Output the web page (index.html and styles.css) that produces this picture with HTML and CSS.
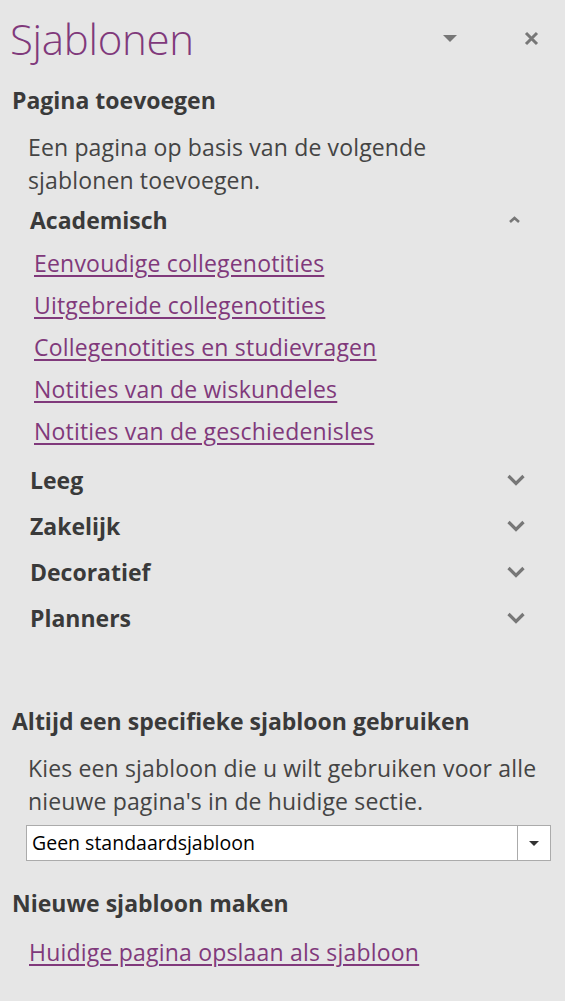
FILE: index.html
```html
<!DOCTYPE html>
<html lang="nl">
<head>
    <meta charset="UTF-8">
    <title>Sjablonen</title>
    <link rel="stylesheet" href="styles.css">
</head>
<body>
    <div class="pane">
        <div class="pane-header">
            <h1 class="pane-title">Sjablonen</h1>
            <div class="pane-actions">
                <span class="menu-btn">
                    <svg width="14" height="7" viewBox="0 0 14 7"><path d="M0 0h14L7 7z" fill="#777"/></svg>
                </span>
                <span class="close-btn">
                    <svg width="15" height="15" viewBox="0 0 15 15"><path d="M2 2l11 11M13 2L2 13" stroke="#777" stroke-width="3"/></svg>
                </span>
            </div>
        </div>

        <h2 class="section-title">Pagina toevoegen</h2>
        <p class="section-text intro">Een pagina op basis van de volgende sjablonen toevoegen.</p>

        <div class="category open">
            <div class="category-head">
                <span>Academisch</span>
                <svg class="chev" width="11" height="7" viewBox="0 0 11 7"><path d="M1 6l4.5-4 4.5 4" fill="none" stroke="#777" stroke-width="2.6"/></svg>
            </div>
            <ul class="template-list">
                <li><a href="#">Eenvoudige collegenotities</a></li>
                <li><a href="#">Uitgebreide collegenotities</a></li>
                <li><a href="#">Collegenotities en studievragen</a></li>
                <li><a href="#">Notities van de wiskundeles</a></li>
                <li><a href="#">Notities van de geschiedenisles</a></li>
            </ul>
        </div>
        <div class="category">
            <div class="category-head">
                <span>Leeg</span>
                <svg class="chev" width="18" height="12" viewBox="0 0 18 12"><path d="M1.5 2l7.5 7.5L16.5 2" fill="none" stroke="#777" stroke-width="3.2"/></svg>
            </div>
        </div>
        <div class="category">
            <div class="category-head">
                <span>Zakelijk</span>
                <svg class="chev" width="18" height="12" viewBox="0 0 18 12"><path d="M1.5 2l7.5 7.5L16.5 2" fill="none" stroke="#777" stroke-width="3.2"/></svg>
            </div>
        </div>
        <div class="category">
            <div class="category-head">
                <span>Decoratief</span>
                <svg class="chev" width="18" height="12" viewBox="0 0 18 12"><path d="M1.5 2l7.5 7.5L16.5 2" fill="none" stroke="#777" stroke-width="3.2"/></svg>
            </div>
        </div>
        <div class="category">
            <div class="category-head">
                <span>Planners</span>
                <svg class="chev" width="18" height="12" viewBox="0 0 18 12"><path d="M1.5 2l7.5 7.5L16.5 2" fill="none" stroke="#777" stroke-width="3.2"/></svg>
            </div>
        </div>

        <h2 class="section-title always">Altijd een specifieke sjabloon gebruiken</h2>
        <p class="section-text">Kies een sjabloon die u wilt gebruiken voor alle nieuwe pagina's in de huidige sectie.</p>
        <div class="combo">
            <span class="combo-value">Geen standaardsjabloon</span>
            <span class="combo-arrow">
                <svg width="10" height="5" viewBox="0 0 10 5"><path d="M0 0h10L5 5z" fill="#333"/></svg>
            </span>
        </div>

        <h2 class="section-title">Nieuwe sjabloon maken</h2>
        <a class="save-link" href="#">Huidige pagina opslaan als sjabloon</a>
    </div>
</body>
</html>
```

FILE: styles.css
```css
body {
    margin: 0;
    background: #e6e6e6;
    font-family: "Open Sans", "Noto Sans", sans-serif;
    color: #444;
}

.pane {
    width: 565px;
    height: 1001px;
    padding: 0 0 0 12px;
    box-sizing: border-box;
}

.pane-header {
    display: flex;
    justify-content: space-between;
    align-items: center;
    height: 76px;
}

.pane-title {
    margin: 0 0 0 -2px;
    font-size: 42px;
    font-weight: 300;
    color: #80397b;
    letter-spacing: -0.3px;
}

.pane-actions {
    display: flex;
    align-items: center;
    gap: 67px;
    padding-right: 26px;
}

.menu-btn, .close-btn {
    display: flex;
}

.section-title {
    margin: 0;
    font-size: 23px;
    font-weight: 700;
    color: #3a3a3a;
    line-height: 48px;
}

.section-title.always {
    margin-top: 56px;
}

.section-text {
    margin: 0;
    padding: 7px 0 0 16px;
    width: 530px;
    font-size: 23px;
    line-height: 33px;
    letter-spacing: 0.15px;
}

.section-text.intro {
    width: 480px;
}

.category-head {
    display: flex;
    justify-content: space-between;
    align-items: center;
    height: 46px;
    padding: 0 40px 0 18px;
    font-size: 23px;
    font-weight: 700;
    color: #3a3a3a;
}

.category.open .category-head {
    height: 45px;
    padding-right: 45px;
}

.template-list {
    list-style: none;
    margin: 0;
    padding: 0 0 5px 22px;
}

.template-list li {
    height: 42px;
    line-height: 42px;
}

.template-list a, .save-link {
    font-size: 23px;
    letter-spacing: 0.2px;
    color: #80397b;
    text-decoration: underline;
    text-underline-offset: 3px;
}

.combo {
    display: flex;
    margin: 7px 0 0 14px;
    width: 525px;
    height: 36px;
    box-sizing: border-box;
    background: #fff;
    border: 1px solid #ababab;
}

.combo-value {
    flex: 1;
    padding-left: 5px;
    font-size: 19.5px;
    line-height: 34px;
    color: #000;
}

.combo-arrow {
    display: flex;
    align-items: center;
    justify-content: center;
    width: 32px;
    border-left: 1px solid #ababab;
}

.section-title + .save-link {
    display: inline-block;
    margin: 0 0 0 17px;
    line-height: 50px;
}

.combo + .section-title {
    margin-top: 18px;
}
```
